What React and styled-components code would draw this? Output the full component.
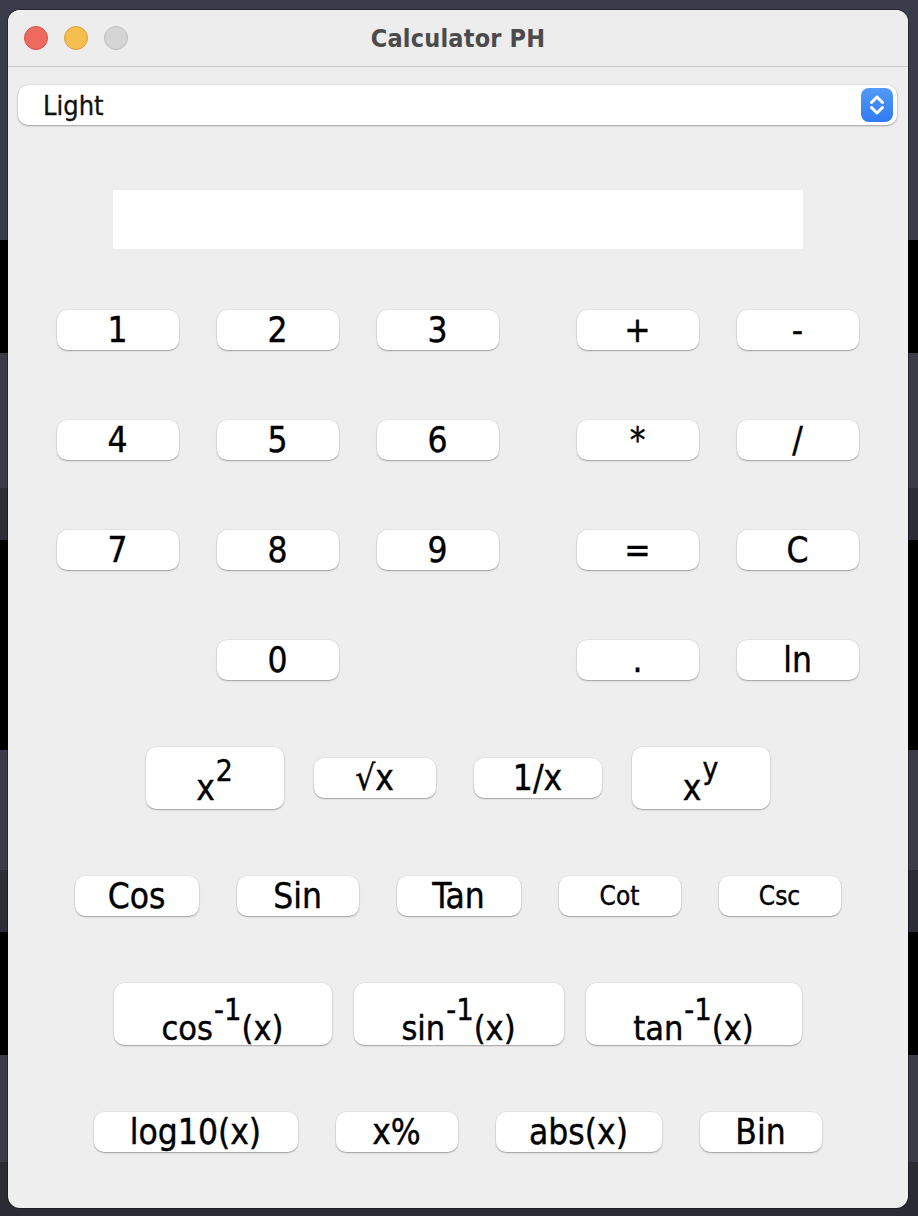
import React from "react";
import styled, { createGlobalStyle } from "styled-components";

const FONT = `"DejaVu Sans Condensed", "DejaVu Sans", "Liberation Sans", sans-serif`;

const GlobalStyle = createGlobalStyle`
  html, body {
    margin: 0;
    padding: 0;
  }
  body {
    width: 918px;
    height: 1216px;
    overflow: hidden;
    font-family: ${FONT};
    background: linear-gradient(
      to bottom,
      #3b3c49 0px, #3b3c49 240px,
      #000 240px, #000 353px,
      #3b3c48 353px, #3b3c48 488px,
      #2c2d36 488px, #2c2d36 540px,
      #000 540px, #000 750px,
      #3b3c48 750px, #3b3c48 870px,
      #2c2d36 870px, #2c2d36 932px,
      #000 932px, #000 1055px,
      #3b3c48 1055px, #3b3c48 1162px,
      #2a2b33 1162px, #2a2b33 1216px
    );
  }
`;

const Desktop = styled.div`
  width: 918px;
  height: 1216px;
  padding: 10px 0 0 8px;
  box-sizing: border-box;
`;

const Window = styled.div`
  width: 900px;
  height: 1198px;
  border-radius: 12px;
  background: #eeeeee;
  overflow: hidden;
  display: flex;
  flex-direction: column;
  box-shadow: 0 0 0 1px rgba(0, 0, 0, 0.35);
`;

const TitleBar = styled.div`
  height: 56px;
  flex-shrink: 0;
  display: grid;
  grid-template-columns: 1fr auto 1fr;
  align-items: center;
  padding: 0 16px;
  background: #ededed;
  border-bottom: 1px solid #c9c9c9;
`;

const Lights = styled.div`
  display: flex;
  gap: 16px;
`;

const Light = styled.span`
  width: 24px;
  height: 24px;
  border-radius: 50%;
  box-sizing: border-box;
  background: ${(p) => p.$fill};
  border: 1px solid ${(p) => p.$edge};
`;

const Title = styled.div`
  font-family: ${FONT};
  font-weight: bold;
  font-size: 25px;
  color: #4b4b4b;
  letter-spacing: 0.2px;
`;

const Content = styled.div`
  padding: 18px 11px 0 10px;
  display: flex;
  flex-direction: column;
`;

const Select = styled.div`
  height: 40px;
  display: flex;
  align-items: center;
  justify-content: space-between;
  padding: 0 4px 0 25px;
  background: #fff;
  border-radius: 10px;
  box-shadow: 0 1px 2px rgba(0, 0, 0, 0.3), 0 0 0 0.5px rgba(0, 0, 0, 0.08);
  font-size: 27px;
  color: #111;
  -webkit-text-stroke: 0.3px #111;
`;

const Stepper = styled.span`
  width: 32px;
  height: 34px;
  border-radius: 8px;
  background: linear-gradient(to bottom, #539af8, #2f7bf2);
  display: flex;
  align-items: center;
  justify-content: center;
`;

const Display = styled.div`
  width: 690px;
  height: 59px;
  margin: 65px auto 0;
  background: #fff;
`;

const Keypad = styled.div`
  margin-top: 61px;
  display: grid;
  grid-template-columns: repeat(3, 122px) 2px repeat(2, 122px);
  grid-auto-rows: 40px;
  column-gap: 38px;
  row-gap: 70px;
  justify-content: center;
`;

const FuncRow = styled.div`
  margin-top: 67px;
  display: flex;
  justify-content: center;
  align-items: center;
  gap: ${(p) => p.$gap}px;
  height: ${(p) => p.$h}px;
`;

const Key = styled.button`
  width: ${(p) => p.$w ?? 122}px;
  height: ${(p) => p.$h ?? 40}px;
  grid-column: ${(p) => p.$col ?? "auto"};
  display: flex;
  align-items: ${(p) => (p.$low ? "flex-end" : "center")};
  justify-content: center;
  padding: 0 0 ${(p) => p.$pb ?? 0}px;
  margin: 0;
  border: none;
  border-radius: 10px;
  background: #fff;
  box-shadow: 0 1px 1.5px rgba(0, 0, 0, 0.3), 0 0 0 0.5px rgba(0, 0, 0, 0.07);
  font-family: ${FONT};
  font-size: ${(p) => p.$fs ?? 35}px;
  line-height: 1;
  color: #000;
  -webkit-text-stroke: 0.4px #000;
  white-space: nowrap;
`;

const Sup = styled.span`
  position: relative;
  bottom: ${(p) => p.$raise ?? 20}px;
  font-size: ${(p) => p.$scale ?? 0.85}em;
  margin-left: 1px;
`;

const digits = [
  ["1", "2", "3", "+", "-"],
  ["4", "5", "6", "*", "/"],
  ["7", "8", "9", "=", "C"],
];

function Chevrons() {
  return (
    <svg width="32" height="34" viewBox="0 0 32 34">
      <path
        d="M10.5 14.5 L16 9 L21.5 14.5 M10.5 19.5 L16 25 L21.5 19.5"
        fill="none"
        stroke="#fff"
        strokeWidth="3"
        strokeLinecap="round"
        strokeLinejoin="round"
      />
    </svg>
  );
}

export default function App() {
  return (
    <>
      <GlobalStyle />
      <Desktop>
        <Window>
          <TitleBar>
            <Lights>
              <Light $fill="#ee6a5f" $edge="#d4544a" />
              <Light $fill="#f5be4f" $edge="#d9a13d" />
              <Light $fill="#d5d5d5" $edge="#bebebe" />
            </Lights>
            <Title>Calculator PH</Title>
            <span />
          </TitleBar>

          <Content>
            <Select>
              <span>Light</span>
              <Stepper>
                <Chevrons />
              </Stepper>
            </Select>

            <Display />

            <Keypad>
              {digits.map((row) =>
                row.map((k, i) => (
                  <Key key={k} $col={i >= 3 ? i + 2 : i + 1}>
                    {k}
                  </Key>
                ))
              )}
              <Key $col={2}>0</Key>
              <Key $col={5}>.</Key>
              <Key $col={6}>ln</Key>
            </Keypad>

            <FuncRow $gap={30} $h={62}>
              <Key $w={138} $h={62} $low $pb={3}>
                x<Sup>2</Sup>
              </Key>
              <Key style={{ marginRight: 8 }}>√x</Key>
              <Key $w={128}>1/x</Key>
              <Key $w={138} $h={62} $low $pb={3}>
                x<Sup $raise={22}>y</Sup>
              </Key>
            </FuncRow>

            <FuncRow $gap={38} $h={40}>
              <Key $w={124}>Cos</Key>
              <Key>Sin</Key>
              <Key $w={124}>Tan</Key>
              <Key $fs={26}>Cot</Key>
              <Key $fs={26}>Csc</Key>
            </FuncRow>

            <FuncRow $gap={22} $h={62}>
              <Key $w={218} $h={62} $low $fs={34}>
                cos<Sup $raise={19} $scale={0.9}>-1</Sup>(x)
              </Key>
              <Key $w={210} $h={62} $low $fs={34}>
                sin<Sup $raise={19} $scale={0.9}>-1</Sup>(x)
              </Key>
              <Key $w={216} $h={62} $low $fs={34}>
                tan<Sup $raise={19} $scale={0.9}>-1</Sup>(x)
              </Key>
            </FuncRow>

            <FuncRow $gap={38} $h={40}>
              <Key $w={204}>log10(x)</Key>
              <Key>x%</Key>
              <Key $w={166}>abs(x)</Key>
              <Key>Bin</Key>
            </FuncRow>
          </Content>
        </Window>
      </Desktop>
    </>
  );
}
